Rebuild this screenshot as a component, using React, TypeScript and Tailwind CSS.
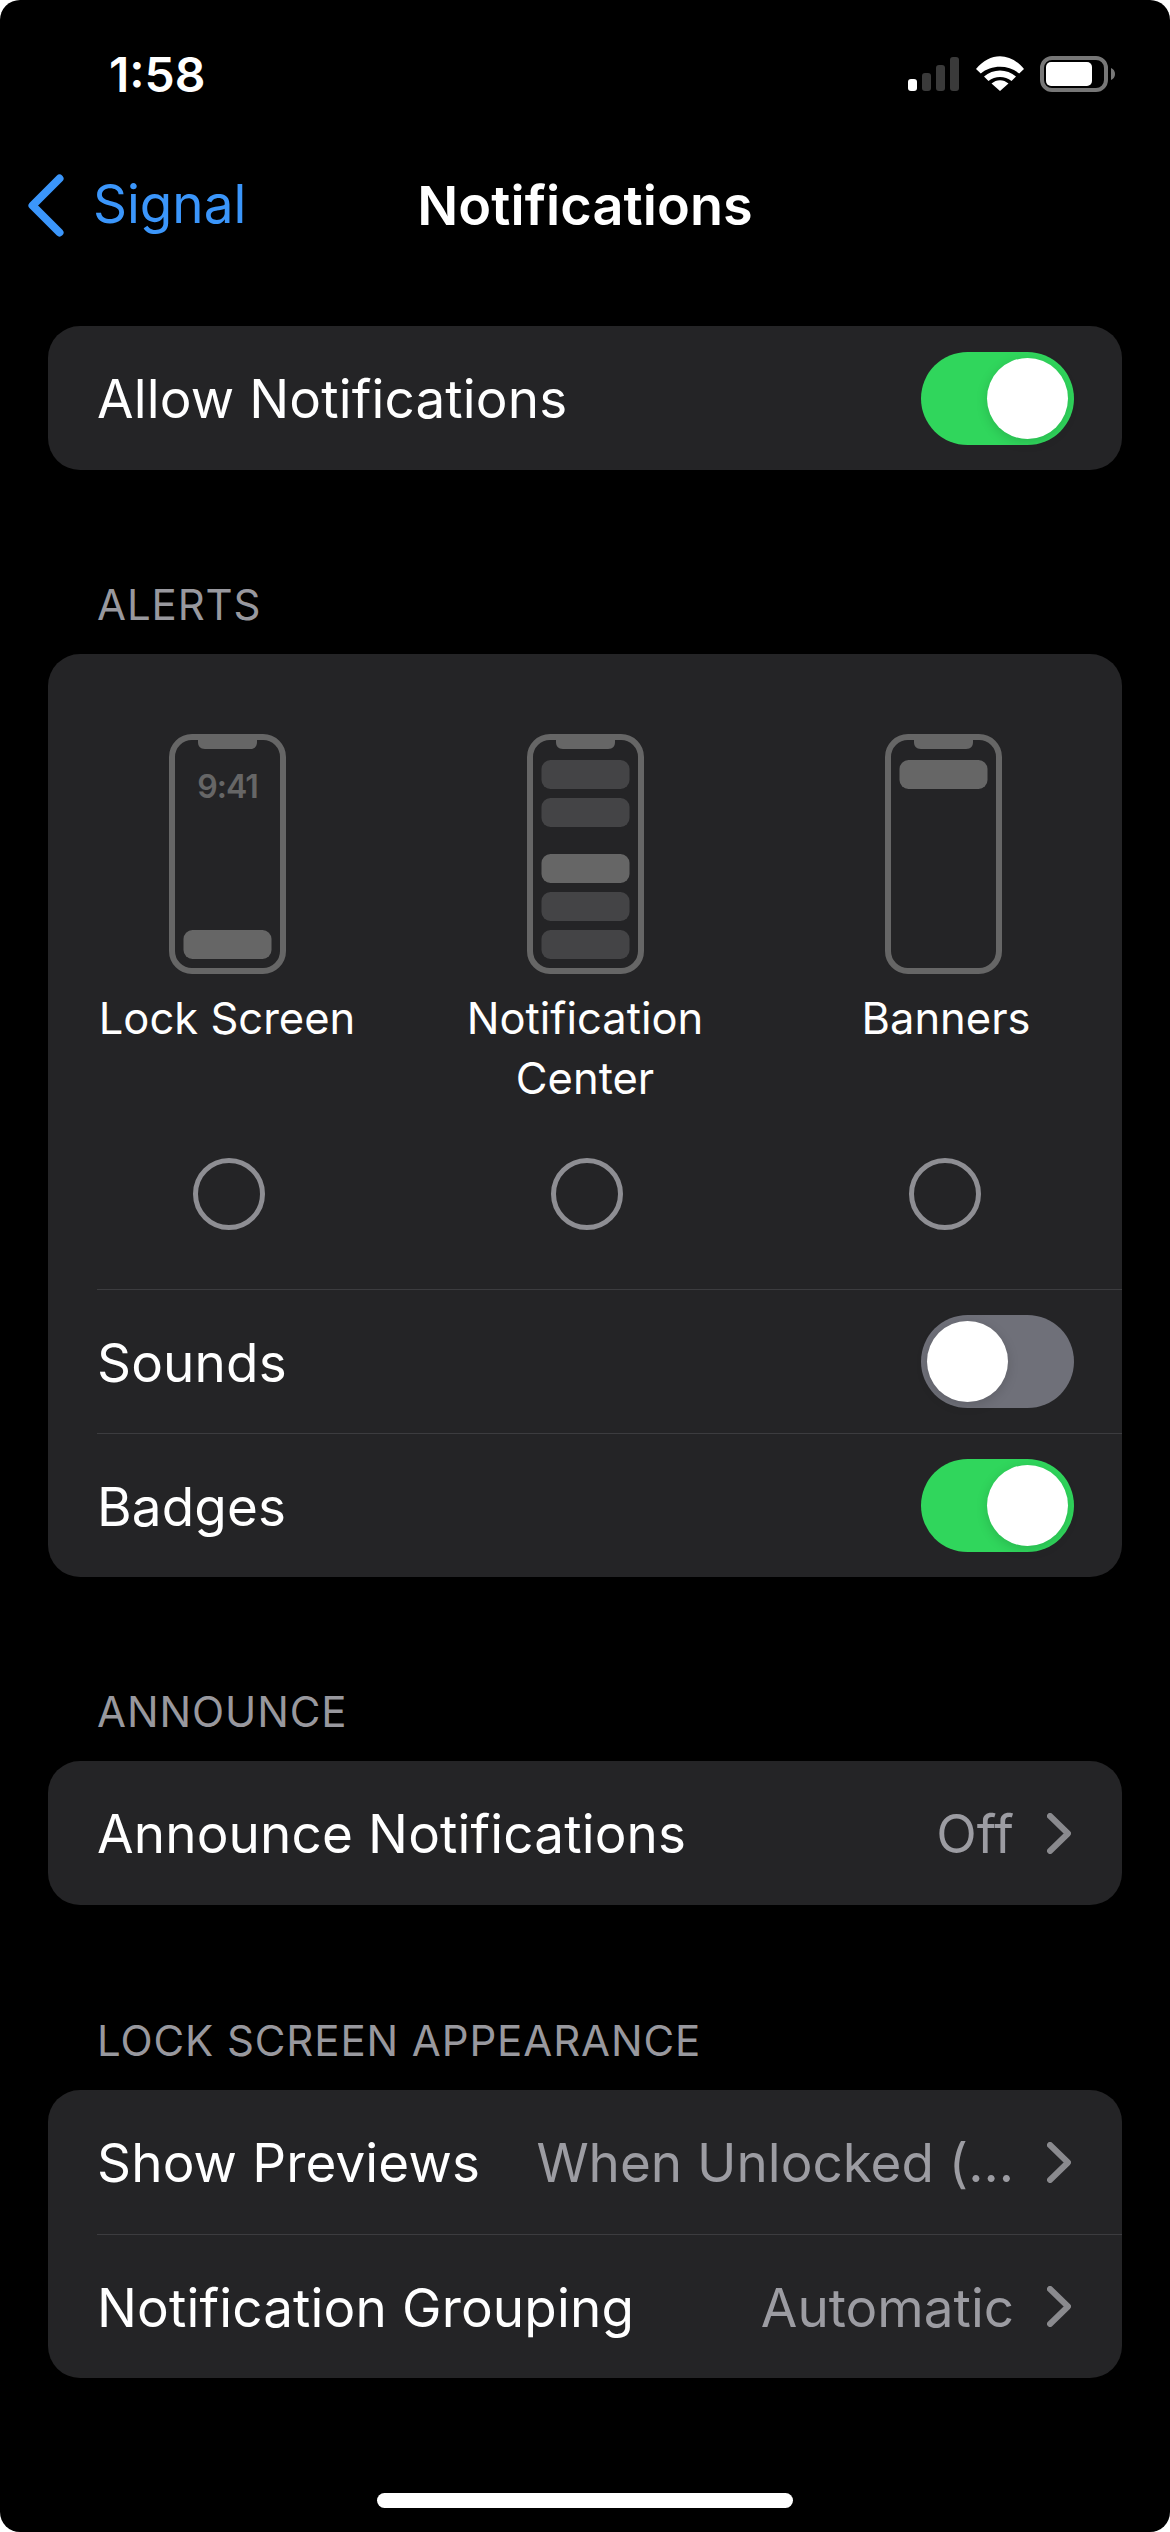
import React from 'react';

function Chevron() {
  return (
    <svg width="24" height="41" viewBox="0 0 24 41" className="shrink-0" fill="none">
      <path d="M3 3L21 20.5L3 38" stroke="#8a8a8e" strokeWidth="6" strokeLinecap="round" strokeLinejoin="round" />
    </svg>
  );
}

function Toggle({ on }: { on: boolean }) {
  return (
    <div
      className={`flex h-[93px] w-[153px] shrink-0 items-center rounded-full p-[6px] ${
        on ? 'justify-end bg-[#30d65c]' : 'justify-start bg-[#6f7079]'
      }`}
    >
      <div className="size-[81px] rounded-full bg-white shadow-[0_3px_12px_rgba(0,0,0,0.15)]" />
    </div>
  );
}

function Row({ label, children, divider }: { label: string; children?: React.ReactNode; divider?: boolean }) {
  return (
    <div className="pl-[49px]">
      <div
        className={`flex h-[144px] items-center justify-between pr-[48px] ${
          divider ? 'border-t border-[#3c3c3f]' : ''
        }`}
      >
        <span className="whitespace-nowrap pt-[4px] text-[53px] tracking-[0.15px] text-white">{label}</span>
        {children}
      </div>
    </div>
  );
}

function ValueRow({ label, value, divider }: { label: string; value: string; divider?: boolean }) {
  return (
    <Row label={label} divider={divider}>
      <div className="flex items-center gap-[33px] pr-[3px]">
        <span className="whitespace-nowrap pt-[4px] text-[53px] text-[#9c9ca2]">{value}</span>
        <Chevron />
      </div>
    </Row>
  );
}

function SectionLabel({ children, top }: { children: string; top: string }) {
  return (
    <div className={`${top} mb-[25px] flex h-[50px] items-center pl-[49px] text-[42px] tracking-[0.9px] text-[#98989e]`}>
      {children}
    </div>
  );
}

function PhoneArt({ kind }: { kind: 'lock' | 'center' | 'banner' }) {
  const frame = '#666666';
  return (
    <svg width="117" height="240" viewBox="0 0 117 240" fill="none">
      <rect x="3" y="3" width="111" height="234" rx="20" stroke={frame} strokeWidth="6" />
      <path d="M29 3H88V8C88 12 86 15 81 15H36C31 15 29 12 29 8Z" fill={frame} />
      {kind === 'lock' && (
        <>
          <text
            x="58.5"
            y="64"
            textAnchor="middle"
            fontSize="32"
            fontWeight="600"
            fill={frame}
            letterSpacing="-1"
            fontFamily="Inter, sans-serif"
          >
            9:41
          </text>
          <rect x="14.5" y="196" width="88" height="29" rx="9" fill={frame} />
        </>
      )}
      {kind === 'center' && (
        <>
          <rect x="14.5" y="26" width="88" height="29" rx="9" fill="#444446" />
          <rect x="14.5" y="64" width="88" height="29" rx="9" fill="#444446" />
          <rect x="14.5" y="120" width="88" height="29" rx="9" fill={frame} />
          <rect x="14.5" y="158" width="88" height="29" rx="9" fill="#444446" />
          <rect x="14.5" y="196" width="88" height="29" rx="9" fill="#444446" />
        </>
      )}
      {kind === 'banner' && <rect x="14.5" y="26" width="88" height="29" rx="9" fill={frame} />}
    </svg>
  );
}

function AlertOption({ kind, lines }: { kind: 'lock' | 'center' | 'banner'; lines: string[] }) {
  return (
    <div className="flex flex-col items-center">
      <PhoneArt kind={kind} />
      <div
        className={`mt-[14px] h-[120px] text-center text-[43.5px] leading-[60px] text-white ${
          kind === 'banner' ? 'pl-[6px]' : ''
        }`}
      >
        {lines.map((line) => (
          <div key={line}>{line}</div>
        ))}
      </div>
      <div className="ml-[3px] mt-[50px] size-[72px] rounded-full border-[5px] border-[#8e8e93]" />
    </div>
  );
}

function StatusIcons() {
  return (
    <svg width="210" height="40" viewBox="0 0 210 40" fill="none" className="mt-[6px] shrink-0">
      <rect x="0" y="23" width="9" height="12" rx="3" fill="#fff" />
      <rect x="14" y="17" width="9" height="18" rx="3" fill="#3a3a3a" />
      <rect x="28" y="9" width="9" height="26" rx="3" fill="#3a3a3a" />
      <rect x="42" y="1" width="9" height="34" rx="3" fill="#3a3a3a" />
      <path
        d="M92 35L83.5 27.5C88.5 23 95.5 23 100.5 27.5Z M76 20.5L80.5 25C87 19.5 97 19.5 103.5 25L108 20.5C99 12.5 85 12.5 76 20.5Z M68 13L72.8 17.6C83 8.6 101 8.6 111.2 17.6L116 13C102 -4 82 -4 68 13Z"
        fill="#fff"
      />
      <rect x="134" y="2" width="64" height="32" rx="10" stroke="#777" strokeWidth="4" />
      <rect x="138" y="6" width="46" height="24" rx="5" fill="#fff" />
      <path d="M203 12C205.5 13 207 15 207 18C207 21 205.5 23 203 24Z" fill="#777" />
    </svg>
  );
}

export default function App() {
  return (
    <div className="h-[2532px] w-[1170px] overflow-hidden bg-white [font-family:Inter,sans-serif]">
      <div className="h-full overflow-hidden rounded-[20px] bg-black">
        {/* Status bar */}
        <div className="flex h-[146px] items-center justify-between pl-[109px] pr-[52px]">
          <span className="pt-[3px] text-[48px] font-semibold text-white">1:58</span>
          <StatusIcons />
        </div>

        {/* Nav bar */}
        <div className="relative flex h-[118px] items-center justify-center">
          <div className="absolute inset-y-0 left-[28px] flex items-center gap-[29px]">
            <svg width="36" height="63" viewBox="0 0 36 63" fill="none">
              <path d="M31.5 4.5L4.5 31.5L31.5 58.5" stroke="#3b96fb" strokeWidth="8" strokeLinecap="round" strokeLinejoin="round" />
            </svg>
            <span className="text-[53px] text-[#3b96fb]">Signal</span>
          </div>
          <span className="text-[54px] font-semibold tracking-[0.1px] text-white">Notifications</span>
        </div>

        <div className="mt-[62px] px-[48px]">
          <div className="overflow-hidden rounded-[32px] bg-[#242426]">
            <Row label="Allow Notifications">
              <Toggle on />
            </Row>
          </div>

          <SectionLabel top="mt-[109px]">ALERTS</SectionLabel>
          <div className="overflow-hidden rounded-[32px] bg-[#242426]">
            <div className="grid h-[635px] grid-cols-3 pt-[80px]">
              <AlertOption kind="lock" lines={['Lock Screen']} />
              <AlertOption kind="center" lines={['Notification', 'Center']} />
              <AlertOption kind="banner" lines={['Banners']} />
            </div>
            <Row label="Sounds" divider>
              <Toggle on={false} />
            </Row>
            <Row label="Badges" divider>
              <Toggle on />
            </Row>
          </div>

          <SectionLabel top="mt-[109px]">ANNOUNCE</SectionLabel>
          <div className="overflow-hidden rounded-[32px] bg-[#242426]">
            <ValueRow label="Announce Notifications" value="Off" />
          </div>

          <SectionLabel top="mt-[110px]">LOCK SCREEN APPEARANCE</SectionLabel>
          <div className="overflow-hidden rounded-[32px] bg-[#242426]">
            <ValueRow label="Show Previews" value="When Unlocked (..." />
            <ValueRow label="Notification Grouping" value="Automatic" divider />
          </div>
        </div>

        {/* Home indicator */}
        <div className="mx-auto mt-[115px] h-[15px] w-[416px] rounded-full bg-white" />
      </div>
    </div>
  );
}
